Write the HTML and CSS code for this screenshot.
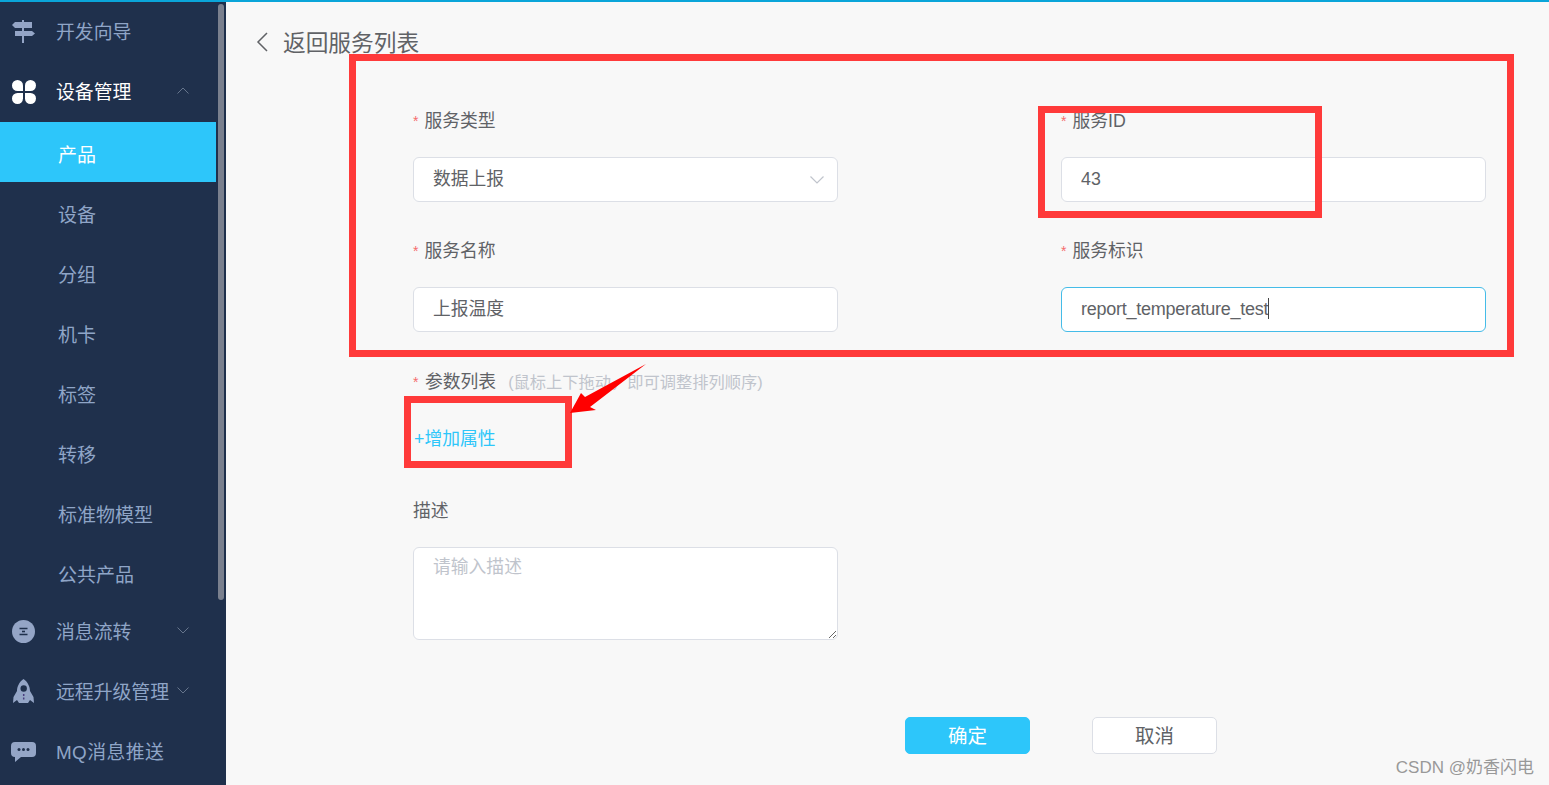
FILE: index.html
```html
<!DOCTYPE html>
<html lang="zh-CN">
<head>
<meta charset="utf-8">
<title>返回服务列表</title>
<link rel="stylesheet" href="styles.css">
</head>
<body>
<div class="topline"></div>
<div class="app">
  <aside class="sidebar">
    <nav class="menu">
      <a class="item">
        <svg class="icon" viewBox="0 0 26 26"><path d="M12 1h2v23h-2z"/><path d="M2 6l3-3h17v6H5z"/><path d="M5 12h17l3 2.500L22 17H5z"/></svg>
        <span>开发向导</span>
      </a>
      <a class="item open">
        <svg class="icon" viewBox="0 0 26 26"><g transform="translate(2 1)"><path d="M11 11H5.500a5.500 5.500 0 1 1 5.500-5.500z"/><path d="M13 11V5.500a5.500 5.500 0 1 1 5.500 5.500z"/><path d="M11 13v5.500a5.500 5.500 0 1 1-5.500-5.500z"/><path d="M13 13h5.500a5.500 5.500 0 1 1-5.500 5.500z"/></g></svg>
        <span>设备管理</span>
        <svg class="chev" viewBox="0 0 12 7"><path d="M.5 6.500L6 1l5.500 5.500"/></svg>
      </a>
      <a class="sub active">产品</a>
      <a class="sub">设备</a>
      <a class="sub">分组</a>
      <a class="sub">机卡</a>
      <a class="sub">标签</a>
      <a class="sub">转移</a>
      <a class="sub">标准物模型</a>
      <a class="sub">公共产品</a>
      <a class="item">
        <svg class="icon" viewBox="0 0 26 26"><circle cx="13.500" cy="12.500" r="11.500"/><path class="cut" d="M9.500 9.500h8M9.500 15.500h8"/><path class="cut" d="M12 12.500h3"/></svg>
        <span>消息流转</span>
        <svg class="chev" viewBox="0 0 12 7"><path d="M.5.500L6 6l5.500-5.500"/></svg>
      </a>
      <a class="item">
        <svg class="icon" viewBox="0 0 26 26"><path d="M13.500 0C9 3 7 8 7 12l-3.500 6L3 24l4-3 2 3h9l2-3 4 3-.5-6L20 12c0-4-2-9-6.500-12z"/><circle class="hole" cx="13.700" cy="9.500" r="3.200"/><path class="cut dash" d="M13.700 15v7"/></svg>
        <span>远程升级管理</span>
        <svg class="chev" viewBox="0 0 12 7"><path d="M.5.500L6 6l5.500-5.500"/></svg>
      </a>
      <a class="item">
        <svg class="icon" viewBox="0 0 26 26"><path d="M5 3h17a4 4 0 0 1 4 4v7a4 4 0 0 1-4 4H11l-6 5v-5a4 4 0 0 1-4-4V7a4 4 0 0 1 4-4z"/><circle class="hole" cx="9" cy="10.500" r="1.500"/><circle class="hole" cx="13.500" cy="10.500" r="1.500"/><circle class="hole" cx="18" cy="10.500" r="1.500"/></svg>
        <span class="mq">MQ消息推送</span>
      </a>
    </nav>
    <div class="scrollthumb"></div>
  </aside>

  <main class="main">
    <header class="back">
      <svg class="back-icon" viewBox="0 0 12 20"><path d="M11 1L2 10l9 9"/></svg>
      <span>返回服务列表</span>
    </header>

    <form class="form">
      <div class="grid">
        <div class="field">
          <label class="label"><i class="star">*</i>服务类型</label>
          <div class="control select">
            <span>数据上报</span>
            <svg class="select-arrow" viewBox="0 0 14 8"><path d="M.5.500L7 7l6.500-6.500"/></svg>
          </div>
        </div>
        <div class="field">
          <label class="label"><i class="star">*</i>服务ID</label>
          <input class="control" value="43">
        </div>
        <div class="field">
          <label class="label"><i class="star">*</i>服务名称</label>
          <input class="control control-cjk" value="上报温度">
        </div>
        <div class="field">
          <label class="label"><i class="star">*</i>服务标识</label>
          <div class="control focused">report_temperature_test<span class="caret"></span></div>
        </div>
      </div>

      <div class="params">
        <label class="label"><i class="star">*</i><span class="params-title">参数列表</span><span class="hint">(鼠标上下拖动&#xFF0C;即可调整排列顺序)</span></label>
        <a class="add">+增加属性</a>
      </div>

      <div class="desc">
        <label class="label">描述</label>
        <textarea class="textarea" placeholder="请输入描述"></textarea>
      </div>

      <div class="actions">
        <button type="button" class="btn primary">确定</button>
        <button type="button" class="btn">取消</button>
      </div>
    </form>
  </main>
</div>

<div class="mark mark-form"></div>
<div class="mark mark-id"></div>
<div class="mark mark-add"></div>
<svg class="arrow" viewBox="0 0 85 60"><path d="M85 4L24 37l-4-4L9 53l26-3-6-3z"/></svg>
<div class="watermark">CSDN @奶香闪电</div>
</body>
</html>
```
FILE: styles.css
```css
* { box-sizing: border-box; }
html, body { margin: 0; height: 100%; overflow: hidden; }
body {
  position: relative;
  background: #f8f8f8;
  color: #606266;
  font-family: "Liberation Sans", "Noto Sans CJK SC", sans-serif;
  font-size: 17.800px;
}
.topline { height: 2px; background: #0aa5d9; }
.app { display: flex; height: 783px; }

/* sidebar */
.sidebar { position: relative; flex: 0 0 226px; background: #1f304c; overflow: hidden; }
.menu { width: 216px; display: flex; flex-direction: column; }
.item {
  display: flex; align-items: center; height: 60px;
  padding: 0 27px 0 10px;
  color: #8fa5c7; font-size: 18.850px; line-height: 24px;
}
.item.open { color: #fff; }
.item span { margin-left: 20px; padding-top: 2px; }
.item .mq { letter-spacing: .4px; }
.icon { width: 26px; height: 26px; flex: none; fill: #94a5c6; }
.item.open .icon { fill: #fff; }
.cut { fill: none; stroke: #1f304c; stroke-width: 1.600; }
.dash { stroke: #4b3f7f; stroke-width: 1.500; stroke-dasharray: 2 1.500; }
.hole { fill: #1f304c; }
.chev {
  width: 12px; height: 7px; margin: 0 0 4px auto; flex: none;
  fill: none; stroke: #66758c; stroke-width: 1;
}
.sub {
  display: block; height: 60px; padding: 22px 0 0 58px;
  color: #8fa5c7; font-size: 19px; line-height: 24px;
}
.sub.active { background: #2dc6fa; color: #fff; }
.scrollthumb {
  position: absolute; left: 218px; top: 2px;
  width: 6px; height: 596px; border-radius: 3px; background: #7a808e;
}

/* main */
.main { flex: 1; min-width: 0; }
.back {
  display: flex; align-items: center; gap: 15px;
  height: 30px; margin-top: 26px; padding-left: 30px;
  font-size: 22.700px; line-height: 30px; color: #606266;
}
.back-icon { width: 12px; height: 20px; margin-bottom: 2px; fill: none; stroke: #606266; stroke-width: 1.500; }
.form { padding: 47px 0 0 187px; width: 1260px; }
.grid { display: grid; grid-template-columns: 425px 425px; column-gap: 223px; row-gap: 33px; }
.label { display: block; height: 30px; padding-top: 1px; line-height: 30px; font-size: 17.800px; color: #606266; }
.star {
  display: inline-block; width: 11.500px; color: #f56c6c;
  font-style: normal; font-size: 14px; vertical-align: 1px;
}
.control {
  display: block; width: 425px; height: 45px; margin-top: 22px; padding: 0 19px;
  border: 1px solid #dcdfe6; border-radius: 6px; background: #fff;
  font: inherit; font-size: 17.800px; line-height: 43px; color: #606266; outline: none;
}
.control-cjk { padding-bottom: 5px; }
.select { display: flex; align-items: center; justify-content: space-between; padding-right: 13px; }
.select-arrow { width: 14px; height: 8px; fill: none; stroke: #c0c4cc; stroke-width: 1.200; }
.focused { border-color: #45bce8; font-size: 18px; letter-spacing: -.26px; }
.caret {
  display: inline-block; width: 1px; height: 21px;
  background: #444; vertical-align: -4px;
}
.params { margin-top: 34px; }
.params-title { margin-left: .5px; }
.hint { margin-left: 12px; font-size: 16.250px; color: #c0c4cc; }
.add { display: block; height: 30px; margin-top: 27px; padding: 1px 0 0 1px; line-height: 30px; color: #2dc6fa; }
.desc { margin-top: 42px; }
.textarea {
  display: block; width: 425px; height: 93px; margin-top: 22px; padding: 7px 19px;
  border: 1px solid #dcdfe6; border-radius: 6px; background: #fff;
  font: inherit; font-size: 17.800px; line-height: 24px; color: #606266; outline: none;
}
.textarea::placeholder { color: #c0c4cc; opacity: 1; }
.actions { display: flex; gap: 62px; margin-top: 77px; padding-left: 492px; }
.btn {
  width: 125px; height: 37px; padding: 2px 0 0;
  border: 1px solid #dcdfe6; border-radius: 5px; background: #fff;
  font: inherit; font-size: 19.500px; line-height: 33px; color: #606266;
}
.btn.primary { background: #2dc6fa; border-color: #2dc6fa; color: #fff; }

/* annotations drawn over the screenshot */
.mark { position: absolute; border: 7px solid #ff3a3a; }
.mark-form { left: 349px; top: 54px; width: 1165px; height: 303px; }
.mark-id { left: 1038px; top: 106px; width: 284px; height: 112px; }
.mark-add { left: 404px; top: 396px; width: 168px; height: 72px; }
.arrow { position: absolute; left: 561px; top: 360px; width: 85px; height: 60px; fill: #f00; }
.watermark {
  position: absolute; right: 15px; top: 757px;
  font-size: 17px; line-height: 22px; color: #999;
}
```
